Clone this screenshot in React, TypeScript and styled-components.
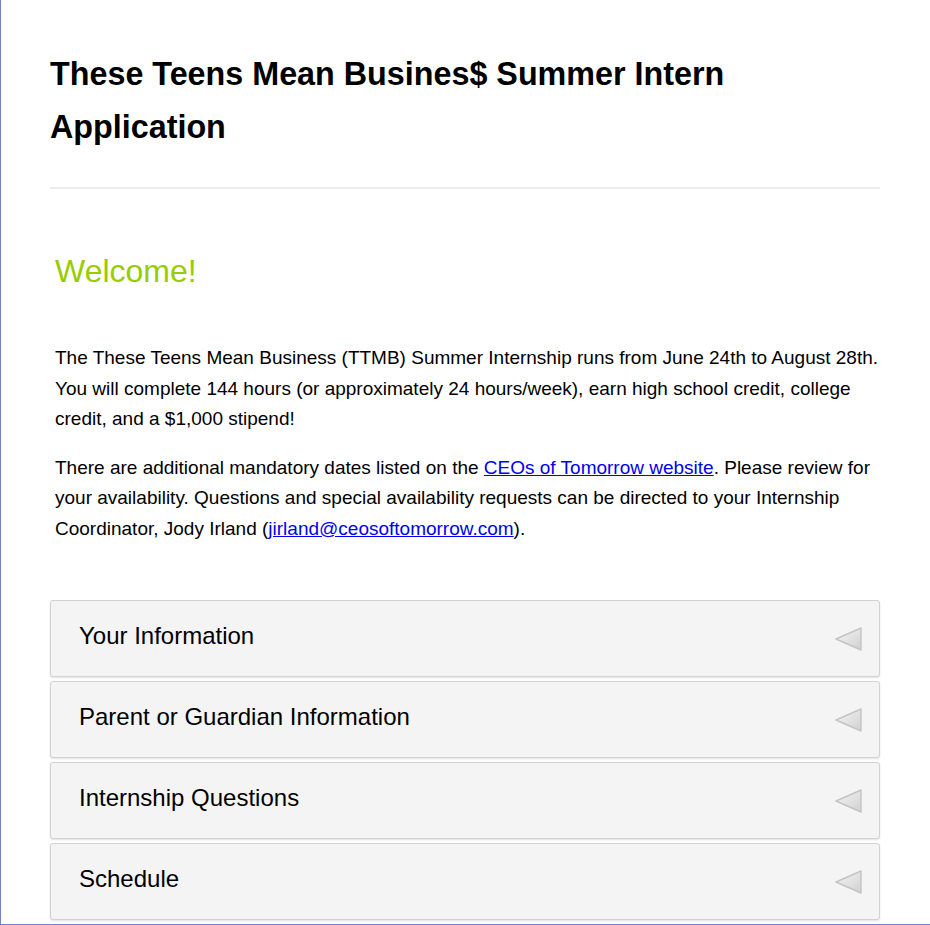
import React from 'react'
import styled, { createGlobalStyle } from 'styled-components'

const GlobalStyle = createGlobalStyle`
  html, body {
    margin: 0;
    padding: 0;
    background: #fff;
  }
  body {
    font-family: "Liberation Sans", Arial, sans-serif;
    color: #000;
  }
`

const Page = styled.div`
  box-sizing: border-box;
  width: 930px;
  padding: 48px 50px 4px 49px;
  border-left: 1px solid #7384c4;
  border-bottom: 1px solid #7384c4;
`

const Title = styled.h1`
  margin: 0;
  font-size: 32.3px;
  line-height: 53px;
  font-weight: bold;
`

const Divider = styled.hr`
  margin: 33px 0 0;
  border: 0;
  border-top: 2px solid #ececec;
`

const Intro = styled.section`
  padding: 0 0 0 5px;
  width: 838px;
`

const Welcome = styled.h2`
  margin: 63px 0 0;
  font-size: 32px;
  line-height: 38px;
  font-weight: normal;
  color: #99cc00;
`

const Para = styled.p<{ $first?: boolean }>`
  margin: ${(p) => (p.$first ? '53px' : '18px')} 0 0;
  font-size: 19px;
  line-height: 30.6px;
`

const Link = styled.a`
  color: #0000ee;
  text-decoration: underline;
`

const Accordion = styled.div`
  margin-top: 55px;
  display: flex;
  flex-direction: column;
  gap: 4px;
`

const Item = styled.div`
  box-sizing: border-box;
  height: 77px;
  display: flex;
  align-items: center;
  justify-content: space-between;
  padding: 0 17px 0 28px;
  background: #f4f4f4;
  border: 1px solid #d2d2d2;
  border-radius: 3px;
  box-shadow: 0 1px 2px rgba(0, 0, 0, 0.12);
  font-size: 24px;
  cursor: pointer;
`

const Label = styled.span`
  line-height: 28px;
  margin-top: -4px;
`

function Arrow() {
  return (
    <svg width="27" height="25" viewBox="0 0 27 25">
      <defs>
        <linearGradient id="arr" x1="0" y1="0" x2="1" y2="1">
          <stop offset="0" stopColor="#f6f6f6" />
          <stop offset="1" stopColor="#d0d0d0" />
        </linearGradient>
      </defs>
      <polygon
        points="1,13 26,2 26,24"
        fill="url(#arr)"
        stroke="#c4c4c4"
        strokeWidth="1.4"
        strokeLinejoin="round"
      />
    </svg>
  )
}

const sections = [
  'Your Information',
  'Parent or Guardian Information',
  'Internship Questions',
  'Schedule',
]

export default function App() {
  return (
    <>
      <GlobalStyle />
      <Page>
        <Title>These Teens Mean Busines$ Summer Intern Application</Title>
        <Divider />
        <Intro>
          <Welcome>Welcome!</Welcome>
          <Para $first>
            The These Teens Mean Business (TTMB) Summer Internship runs from June 24th to
            August 28th. You will complete 144 hours (or approximately 24 hours/week), earn
            high school credit, college credit, and a $1,000 stipend!
          </Para>
          <Para>
            There are additional mandatory dates listed on the{' '}
            <Link href="#">CEOs of Tomorrow website</Link>. Please review for your
            availability. Questions and special availability requests can be directed to your
            Internship Coordinator, Jody Irland (
            <Link href="#">jirland@ceosoftomorrow.com</Link>).
          </Para>
        </Intro>
        <Accordion>
          {sections.map((s) => (
            <Item key={s}>
              <Label>{s}</Label>
              <Arrow />
            </Item>
          ))}
        </Accordion>
      </Page>
    </>
  )
}
